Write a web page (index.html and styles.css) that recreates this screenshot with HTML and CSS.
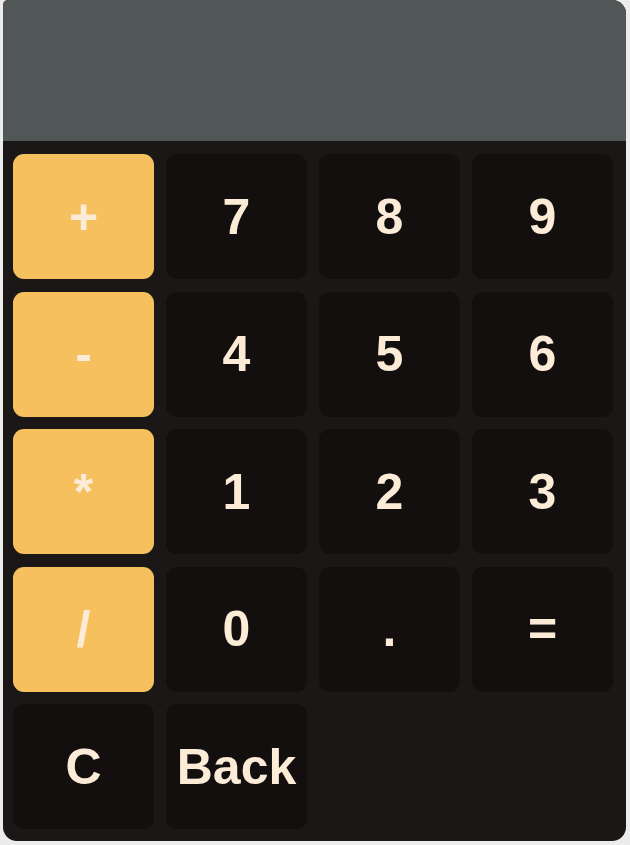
FILE: index.html
```html
<!DOCTYPE html>
<html>
<head>
<meta charset="utf-8">
<link rel="stylesheet" href="styles.css">
</head>
<body>
<div class="calc">
  <div class="display"></div>
  <div class="keys">
    <button class="key op">+</button>
    <button class="key">7</button>
    <button class="key">8</button>
    <button class="key">9</button>
    <button class="key op">-</button>
    <button class="key">4</button>
    <button class="key">5</button>
    <button class="key">6</button>
    <button class="key op">*</button>
    <button class="key">1</button>
    <button class="key">2</button>
    <button class="key">3</button>
    <button class="key op">/</button>
    <button class="key">0</button>
    <button class="key">.</button>
    <button class="key">=</button>
    <button class="key">C</button>
    <button class="key">Back</button>
  </div>
</div>
</body>
</html>
```
FILE: styles.css
```css
html, body {
  margin: 0;
  padding: 0;
  background: #ececec;
}
body {
  width: 630px;
  height: 845px;
  overflow: hidden;
}
.calc {
  margin-left: 3px;
  width: 623px;
  height: 841px;
  background: #1c1717;
  border-radius: 5px 14px 14px 14px;
  overflow: hidden;
  display: flex;
  flex-direction: column;
}
.display {
  height: 141px;
  background: #505756;
  flex: none;
}
.keys {
  padding: 13px 13px 12px 10px;
  display: grid;
  grid-template-columns: repeat(4, 141px);
  grid-template-rows: repeat(5, 125px);
  column-gap: 12px;
  row-gap: 12.5px;
}
.key {
  border: none;
  margin: 0;
  padding: 0;
  border-radius: 11px;
  background: #120f0e;
  color: #fcebd7;
  font-family: "Liberation Sans", Arial, sans-serif;
  font-weight: bold;
  font-size: 50px;
  display: flex;
  align-items: center;
  justify-content: center;
}
.key.op {
  background: #f5c05d;
}
```
